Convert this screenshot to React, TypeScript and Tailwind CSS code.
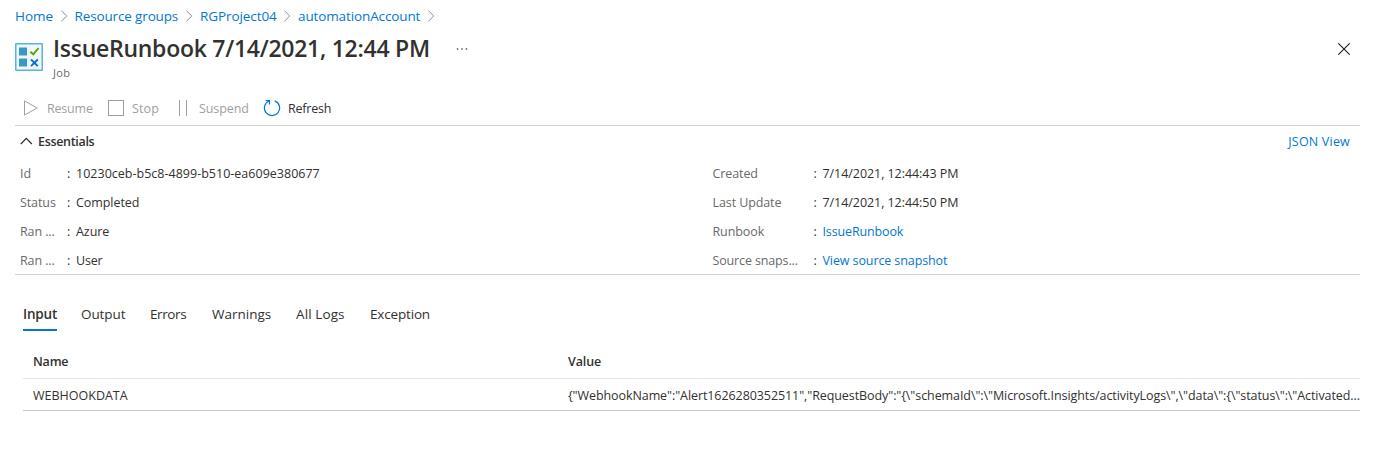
import type { ReactNode } from "react";

const Chevron = () => (
  <svg width="8" height="12" viewBox="0 0 8 12" fill="none" stroke="#8a8a8a" strokeWidth="1">
    <path d="M.5 .8 5.8 6 .5 11.2" />
  </svg>
);

const JobIcon = () => (
  <svg width="28" height="28" viewBox="0 0 28 28" fill="none">
    <rect x=".75" y=".75" width="26.5" height="26.5" rx=".6" fill="#f0f8fc" stroke="#59b4d9" strokeWidth="1.5" />
    <rect x="4" y="4.5" width="8" height="8" fill="#3999c6" />
    <rect x="4" y="15.5" width="8" height="8" fill="#3999c6" />
    <path d="M15.4 8.7 18.3 11.4 23.6 5" stroke="#57a300" strokeWidth="1.9" />
    <path d="m16 16.5 6.8 6.6m0-6.6L16 23.1" stroke="#0072c6" strokeWidth="1.9" />
  </svg>
);

const PlayIcon = () => (
  <svg width="16" height="16" viewBox="0 0 16 16" fill="none" stroke="#a19f9d">
    <path d="M1.5 .9 14.2 8 1.5 15.1Z" />
  </svg>
);

const StopIcon = () => (
  <svg width="16" height="16" viewBox="0 0 16 16" fill="none" stroke="#a19f9d">
    <rect x=".5" y=".5" width="15" height="15" />
  </svg>
);

const PauseIcon = () => (
  <svg width="9" height="16" viewBox="0 0 9 16" fill="none" stroke="#a19f9d">
    <path d="M1.5 0v16M8.5 0v16" />
  </svg>
);

const RefreshIcon = () => (
  <svg width="18" height="18" viewBox="0 0 18 18" fill="none" stroke="#0078d4" strokeWidth="1.2">
    <path d="M11.8 1.9A7.6 7.6 0 1 1 6 2" />
    <path d="M2.6 1.6H6.4V5.6" />
  </svg>
);

function Field({ label, value, link, wide, labelClass = "tracking-[-0.1px]", valueClass = "tracking-[-0.06px]" }: {
  label: string; value: ReactNode; link?: boolean; wide?: boolean; labelClass?: string; valueClass?: string;
}) {
  return (
    <div className="flex h-[29px] items-center">
      <span className={`${wide ? "w-[101px]" : "w-[47px]"} text-[#6b6a69] ${labelClass}`}>{label}</span>
      <span className="w-[9px]">:</span>
      <span className={`${link ? "text-[#0078d4]" : ""} ${valueClass}`}>{value}</span>
    </div>
  );
}

export default function App() {
  return (
    <div className="h-[451px] overflow-hidden bg-white pr-[17px] pl-[15px] font-['Open_Sans',sans-serif] text-[12.5px] leading-[18px] whitespace-nowrap text-[#323130]">
      <nav className="flex h-8 items-center text-[13.5px] text-[#0078d4]">
        <span className="w-[46px]">Home</span>
        <Chevron />
        <span className="ml-[5.5px] w-[111.5px] tracking-[-0.14px]">Resource groups</span>
        <Chevron />
        <span className="ml-[6px] w-[84px] tracking-[-0.08px]">RGProject04</span>
        <Chevron />
        <span className="ml-[6px] w-[130px] tracking-[-0.12px]">automationAccount</span>
        <Chevron />
      </nav>

      <header className="flex h-[59px] items-start">
        <div className="mt-[11px] mr-[10px]"><JobIcon /></div>
        <div className="flex flex-col">
          <h1 className="mb-px h-8 text-[23px] leading-8 font-semibold tracking-[-0.26px]">IssueRunbook 7/14/2021, 12:44 PM</h1>
          <span className="text-[11px] leading-4 tracking-[0.4px] text-[#6b6a69]">Job</span>
        </div>
        <svg className="mt-[15px] ml-[25px]" width="14" height="4" viewBox="0 0 14 4" fill="#323130">
          <circle cx="2.5" cy="2" r=".8" />
          <circle cx="7" cy="2" r=".8" />
          <circle cx="11.5" cy="2" r=".8" />
        </svg>
        <svg className="mt-[11px] mr-[10px] ml-auto" width="12" height="12" viewBox="0 0 12 12" stroke="#201f1e" strokeWidth="1.1">
          <path d="m.3.3 11.4 11.4m0-11.4L.3 11.7" />
        </svg>
      </header>

      <div className="flex h-[35px] items-center border-b border-[#d2d0ce] pl-2 text-[#a19f9d]">
        <PlayIcon />
        <span className="mt-[2px] ml-2 w-[61px] tracking-[-0.2px]">Resume</span>
        <StopIcon />
        <span className="mt-[2px] ml-2 w-[46px] tracking-[0.1px]">Stop</span>
        <PauseIcon />
        <span className="mt-[2px] ml-3 w-16 tracking-[-0.1px]">Suspend</span>
        <RefreshIcon />
        <span className="mt-[2px] ml-[7px] tracking-[-0.2px] text-[#323130]">Refresh</span>
      </div>

      <section className="h-[149px] border-b border-[#d2d0ce]">
        <div className="flex h-8 items-center pr-[10px] pl-[5px]">
          <svg className="mb-[3px]" width="13" height="8" viewBox="0 0 13 8" fill="none" stroke="#323130" strokeWidth="1.3">
            <path d="M.8 7 6.3 1.4 11.8 7" />
          </svg>
          <span className="ml-[5px] font-semibold tracking-[-0.32px]">Essentials</span>
          <span className="ml-auto text-[#0078d4] tracking-[0.2px]">JSON View</span>
        </div>
        <div className="grid grid-cols-[692.5px_1fr] pt-px pl-[5px]">
          <div>
            <Field label="Id" value="10230ceb-b5c8-4899-b510-ea609e380677" valueClass="tracking-[0.01px]" />
            <Field label="Status" value="Completed" />
            <Field label="Ran ..." value="Azure" />
            <Field label="Ran ..." value="User" valueClass="tracking-[-0.2px]" />
          </div>
          <div>
            <Field wide label="Created" value="7/14/2021, 12:44:43 PM" />
            <Field wide label="Last Update" value="7/14/2021, 12:44:50 PM" />
            <Field wide link label="Runbook" value="IssueRunbook" valueClass="tracking-[-0.14px]" />
            <Field wide link label="Source snaps..." value="View source snapshot" labelClass="tracking-[-0.14px]" valueClass="tracking-[-0.1px]" />
          </div>
        </div>
      </section>

      <div className="mt-[23px] flex h-[33px] pl-2 text-[13.5px]">
        <span className="mr-6 flex w-[34px] items-center border-b-2 border-[#0078d4] font-semibold tracking-[-0.2px]">Input</span>
        <span className="flex w-[69px] items-center border-b-2 border-transparent tracking-[-0.1px]">Output</span>
        <span className="flex w-[62px] items-center border-b-2 border-transparent tracking-[-0.4px]">Errors</span>
        <span className="flex w-[84px] items-center border-b-2 border-transparent">Warnings</span>
        <span className="flex w-[74px] items-center border-b-2 border-transparent tracking-[0.1px]">All Logs</span>
        <span className="flex items-center border-b-2 border-transparent tracking-[-0.17px]">Exception</span>
      </div>

      <div className="mt-[14px] ml-2">
        <div className="grid h-[34px] grid-cols-[535px_1fr] items-center border-b border-[#e8e6e4] pl-[10px] font-semibold">
          <span className="tracking-[-0.2px]">Name</span>
          <span className="tracking-[-0.1px]">Value</span>
        </div>
        <div className="grid h-8 grid-cols-[535px_1fr] items-center border-b border-[#c8c6c4] pt-[2px] pl-[10px]">
          <span>WEBHOOKDATA</span>
          <span className="tracking-[-0.08px]">{'{"WebhookName":"Alert1626280352511","RequestBody":"{\\"schemaId\\":\\"Microsoft.Insights/activityLogs\\",\\"data\\":{\\"status\\":\\"Activated...'}</span>
        </div>
      </div>
    </div>
  );
}
